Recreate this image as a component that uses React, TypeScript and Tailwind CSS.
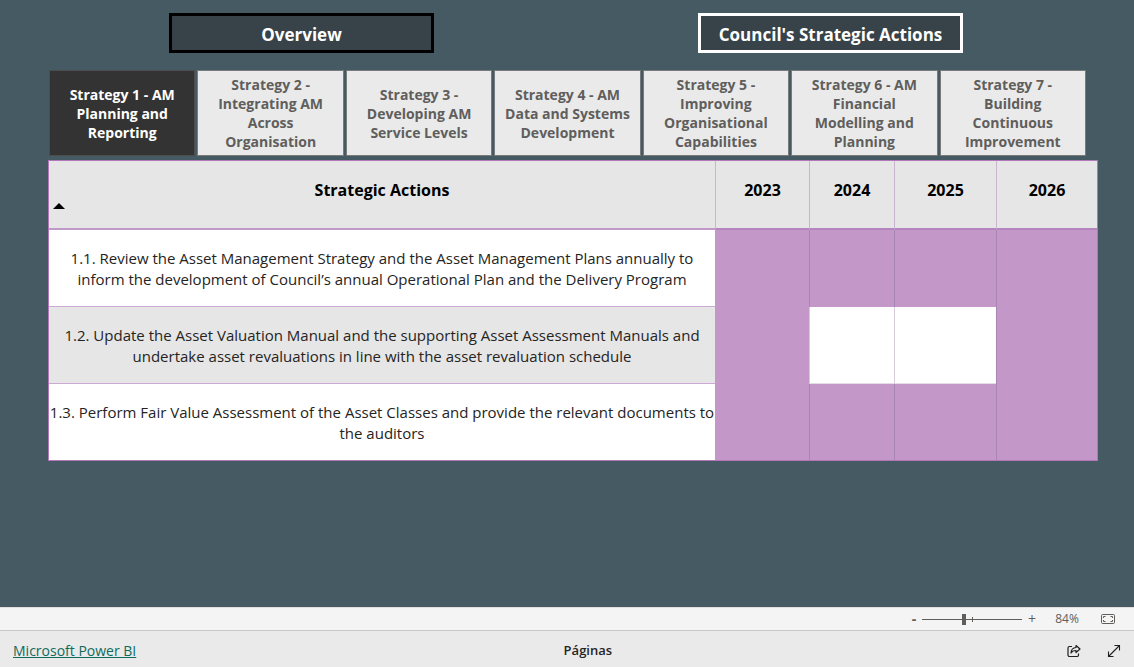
import { useState } from 'react'

interface Action {
  text: string
  years: boolean[]
}

const strategies = [
  'Strategy 1 - AM Planning and Reporting',
  'Strategy 2 - Integrating AM Across Organisation',
  'Strategy 3 - Developing AM Service Levels',
  'Strategy 4 - AM Data and Systems Development',
  'Strategy 5 - Improving Organisational Capabilities',
  'Strategy 6 - AM Financial Modelling and Planning',
  'Strategy 7 - Building Continuous Improvement',
]

const years = ['2023', '2024', '2025', '2026']

const actions: Action[] = [
  {
    text: '1.1. Review the Asset Management Strategy and the Asset Management Plans annually to inform the development of Council’s annual Operational Plan and the Delivery Program',
    years: [true, true, true, true],
  },
  {
    text: '1.2. Update the Asset Valuation Manual and the supporting Asset Assessment Manuals and undertake asset revaluations in line with the asset revaluation schedule',
    years: [true, false, false, true],
  },
  {
    text: '1.3. Perform Fair Value Assessment of the Asset Classes and provide the relevant documents to the auditors',
    years: [true, true, true, true],
  },
]

function FitIcon() {
  return (
    <svg width="16" height="12" viewBox="0 0 16 12" fill="none" stroke="#605e5c">
      <rect x="1.5" y="1.5" width="13" height="9" rx="1" />
      <path d="M5.5 3.5h-2v1.5M3.5 7v1.5h2M10.5 3.5h2v1.5M12.5 7v1.5h-2" />
    </svg>
  )
}

function ShareIcon() {
  return (
    <svg width="14" height="14" viewBox="0 0 14 14" fill="none" stroke="#201f1e" strokeWidth="1.2" strokeLinejoin="round">
      <path d="M5 2.5H2.5A1.5 1.5 0 0 0 1 4v7a1.5 1.5 0 0 0 1.5 1.5H10a1.5 1.5 0 0 0 1.5-1.5V9.5" />
      <path d="M9 1.5 13 5 9 8.5v-2C6.5 6.5 5 7.3 4 9c.2-3 2-5.3 5-5.5z" />
    </svg>
  )
}

function ExpandIcon() {
  return (
    <svg width="14" height="14" viewBox="0 0 14 14" fill="none" stroke="#201f1e" strokeWidth="1.1">
      <path d="M1.5 12.5l11-11M7.5 1.5h5v5M1.5 7.5v5h5" />
    </svg>
  )
}

export default function App() {
  const [active, setActive] = useState(0)
  const [zoom, setZoom] = useState(84)

  return (
    <div className="flex min-h-screen flex-col bg-[#465a64] font-['Open_Sans','Noto_Sans',sans-serif]">
      <main className="flex-1 pb-8">
        {/* Page buttons */}
        <div className="flex justify-center gap-[264px] pt-[13px] pr-0.5">
          <button className="h-10 w-[265px] border-[3px] border-black bg-[#374349] pt-1 text-[17px] font-bold text-white">
            Overview
          </button>
          <button className="h-10 w-[265px] border-[3px] border-white bg-[#374349] pt-1 text-[17px] font-bold text-white">
            Council's Strategic Actions
          </button>
        </div>

        {/* Strategy slicer */}
        <div className="mr-12 ml-[49px] grid grid-cols-7 gap-0.5 pt-[17px]">
          {strategies.map((name, i) => (
            <button
              key={name}
              onClick={() => setActive(i)}
              className={`h-[86px] border px-2 text-sm leading-[19px] font-bold ${
                i === active
                  ? 'border-[#4d4d4d] bg-[#333333] text-white'
                  : 'border-[#7a7a7a] bg-[#eaeaea] text-[#605e5c]'
              }`}
            >
              {name}
            </button>
          ))}
        </div>

        {/* Actions matrix */}
        <div className="mt-1 mr-9 ml-12">
          <table className="w-full table-fixed border-separate border-spacing-0 border border-[#b277b8] text-center">
            <colgroup>
              <col />
              <col className="w-[94px]" />
              <col className="w-[85px]" />
              <col className="w-[102px]" />
              <col className="w-[101px]" />
            </colgroup>
            <thead>
              <tr className="h-[69px] bg-[#e6e6e6] align-top text-base font-bold text-black">
                <th className="relative border-b-2 border-[#c199c8] pt-[17px]">
                  Strategic Actions
                  <svg className="absolute bottom-[19px] left-1" width="12" height="6" viewBox="0 0 12 6">
                    <path d="M0 6 6 0l6 6z" />
                  </svg>
                </th>
                {years.map((year) => (
                  <th key={year} className="border-b-2 border-l border-b-[#b585bd] border-l-[#c9b5d0] pt-[17px]">
                    {year}
                  </th>
                ))}
              </tr>
            </thead>
            <tbody>
              {actions.map((action, i) => (
                <tr key={action.text} className="h-[77px] last:h-[76px]">
                  <td
                    className={`px-0 pt-0.5 text-[15px] leading-[21px] text-[#252423] ${
                      i < actions.length - 1 ? 'border-b border-[#cfa9d6]' : ''
                    } ${i % 2 ? 'bg-[#e6e6e6]' : 'bg-white'}`}
                  >
                    {action.text}
                  </td>
                  {action.years.map((planned, j) => (
                    <td
                      key={years[j]}
                      className={
                        planned
                          ? `bg-[#c397c8] ${j > 0 ? 'border-l border-[#a887b5]' : ''}`
                          : 'border-b border-l border-b-[#e6d9e8] border-l-[#d5cbd9] bg-white'
                      }
                    />
                  ))}
                </tr>
              ))}
            </tbody>
          </table>
        </div>
      </main>

      {/* Zoom bar */}
      <div className="flex h-6 items-center justify-end border-t border-b border-t-[#e1dfdd] border-b-[#c8c8c8] bg-[#f4f4f4] pr-[18px] text-[#605e5c]">
        <button aria-label="Zoom out" className="w-4 text-sm leading-4 font-bold">-</button>
        <div className="relative flex items-center">
          <input
            type="range"
            aria-label="Zoom"
            min={0}
            max={200}
            value={zoom}
            onChange={(e) => setZoom(Number(e.target.value))}
            className="h-3 w-[100px] appearance-none bg-transparent [&::-webkit-slider-runnable-track]:h-px [&::-webkit-slider-runnable-track]:bg-[#605e5c] [&::-webkit-slider-thumb]:-mt-[5px] [&::-webkit-slider-thumb]:h-[11px] [&::-webkit-slider-thumb]:w-1 [&::-webkit-slider-thumb]:appearance-none [&::-webkit-slider-thumb]:bg-[#605e5c]"
          />
          <span className="pointer-events-none absolute left-1/2 h-[5px] w-px bg-[#605e5c]" />
        </div>
        <button aria-label="Zoom in" className="w-5 text-sm leading-4">+</button>
        <span className="w-[50px] text-center text-xs">{zoom}%</span>
        <button aria-label="Fit to page" className="ml-2">
          <FitIcon />
        </button>
      </div>

      {/* Footer */}
      <footer className="grid h-9 grid-cols-[49.7%_1fr] items-center bg-[#eaeaea] pt-1">
        <a href="#" className="ml-[13px] justify-self-start text-sm text-[#0f6b5c] underline">
          Microsoft Power BI
        </a>
        <div className="flex items-center justify-between pr-[13px]">
          <span className="text-[13px] font-semibold text-[#252423]">Páginas</span>
          <div className="flex gap-[26px]">
            <button aria-label="Share">
              <ShareIcon />
            </button>
            <button aria-label="Full screen">
              <ExpandIcon />
            </button>
          </div>
        </div>
      </footer>
    </div>
  )
}
